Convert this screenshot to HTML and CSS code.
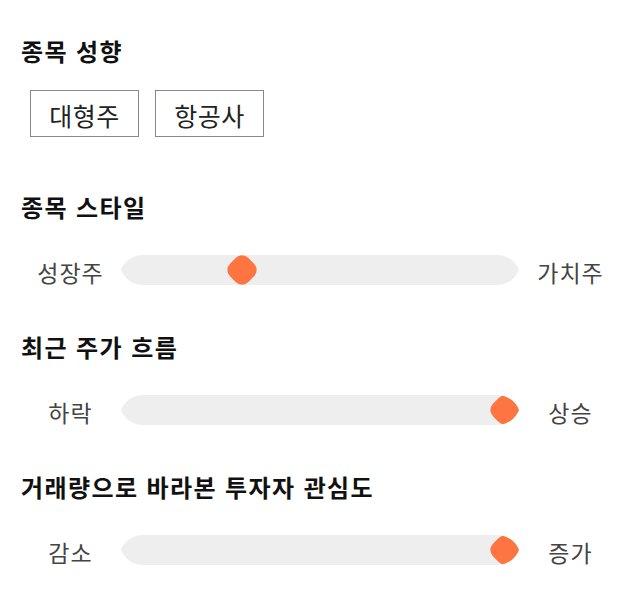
FILE: index.html
```html
<!DOCTYPE html>
<html lang="ko">
<head>
    <meta charset="UTF-8">
    <title>종목 성향</title>
    <link rel="stylesheet" href="styles.css">
</head>
<body>

<div class="panel">
    <div class="section">
        <h2 class="title">종목 성향</h2>
        <div class="tags">
            <span class="tag">대형주</span>
            <span class="tag">항공사</span>
        </div>
    </div>

    <div class="section">
        <h2 class="title">종목 스타일</h2>
        <div class="scale">
            <span class="label">성장주</span>
            <div class="track">
                <span class="thumb" style="left: 30.5%"></span>
            </div>
            <span class="label">가치주</span>
        </div>
    </div>

    <div class="section">
        <h2 class="title">최근 주가 흐름</h2>
        <div class="scale">
            <span class="label">하락</span>
            <div class="track">
                <span class="thumb" style="left: 96.5%"></span>
            </div>
            <span class="label">상승</span>
        </div>
    </div>

    <div class="section">
        <h2 class="title">거래량으로 바라본 투자자 관심도</h2>
        <div class="scale">
            <span class="label">감소</span>
            <div class="track">
                <span class="thumb" style="left: 96.5%"></span>
            </div>
            <span class="label">증가</span>
        </div>
    </div>
</div>

</body>
</html>
```

FILE: styles.css
```css
*{
    box-sizing: border-box;
}
html,body{
    margin: 0;
    padding: 0;
    background: #fff;
}
body{
    min-height: 606px;
    font-family: "Noto Sans CJK KR", "Noto Sans", sans-serif;
    color: #222;
}
.panel{
    display: flex;
    flex-direction: column;
    gap: 48px;
    padding: 35px 20px 30px 20px;
}
.title{
    margin: 0 0 30px 1px;
    font-size: 24px;
    line-height: 32px;
    font-weight: 700;
    letter-spacing: 1.4px;
    color: #111;
}
.section:first-child .title{
    margin-bottom: 23px;
}
.tags{
    display: flex;
    gap: 16px;
    padding: 0 10px 6px 10px;
}
.tag{
    display: flex;
    align-items: center;
    justify-content: center;
    width: 109px;
    height: 47px;
    border: 1px solid #888;
    font-size: 25px;
    line-height: 1;
    padding-top: 4px;
    letter-spacing: 0.5px;
    color: #222;
}
.scale{
    display: grid;
    grid-template-columns: 100px 1fr 100px;
    align-items: center;
    height: 30px;
    margin-top: 1px;
}
.label{
    text-align: center;
    font-size: 23px;
    line-height: 30px;
    padding-top: 4px;
    padding-left: 1px;
    letter-spacing: 1px;
    color: #444;
}
.track{
    position: relative;
    height: 30px;
    margin: 0 1px;
    background: #eee;
    clip-path: path('M22 0 L376 0 A23.6 23.6 0 0 1 398 15 A23.6 23.6 0 0 1 376 30 L22 30 A23.6 23.6 0 0 1 0 15 A23.6 23.6 0 0 1 22 0 Z');
}
.thumb{
    position: absolute;
    top: 2px;
    width: 26px;
    height: 26px;
    margin-left: -13px;
    background: #ff7541;
    border-radius: 9px;
    transform: rotate(45deg);
}
```
